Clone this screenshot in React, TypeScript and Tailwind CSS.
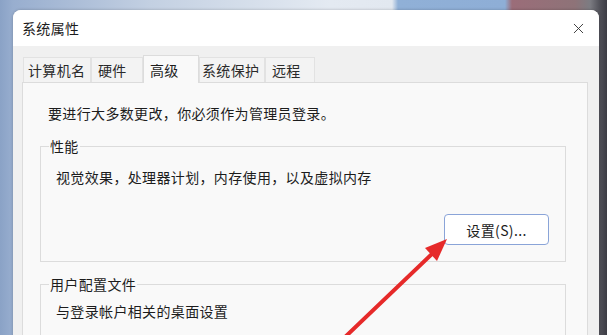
import { X } from 'lucide-react';

const tabs = [
  { label: '计算机名', w: 'w-[68px] pl-[4px]' },
  { label: '硬件', w: 'w-[52px] pl-[6px]' },
  { label: '高级', w: 'w-[56px] pl-[6px]', active: true },
  { label: '系统保护', w: 'w-[66px] pl-[2px]' },
  { label: '远程', w: 'w-[50px] pl-[6px]' },
];

function Arrow() {
  return (
    <svg className="absolute left-0 top-0 pointer-events-none" width="607" height="335" viewBox="0 0 607 335">
      <line x1="343" y1="339" x2="434" y2="252" stroke="#e62a2a" strokeWidth="4" strokeLinecap="round" />
      <polygon points="447,239 437,261 425,248" fill="#e62a2a" />
    </svg>
  );
}

export default function App() {
  return (
    <div
      className="relative w-[607px] h-[335px] overflow-hidden text-[#1c1c1c] tracking-[0.35px] bg-[linear-gradient(90deg,#8aa2c6_0px,#98aecf_13px,#c3d0e2_150px,#e4eaf2_330px,#e2e8f0_392px,#90b0d7_398px,#8eaed6_505px,#9b6d79_512px,#8e7378_575px,#7c7c82_590px,#505058_600px,#3c3c44_607px)]"
      style={{ fontFamily: '"Noto Sans CJK SC", "Noto Sans", sans-serif' }}
    >
      <div className="ml-[13px] mt-[10px] w-[586px] h-[340px] rounded-t-[8px] overflow-hidden bg-[#f0f0f0] shadow-[0_0_3px_rgba(0,0,0,0.25)]">
        {/* title bar */}
        <div className="h-[36px] bg-white flex items-center justify-between pl-[9px] pr-[12px]">
          <span className="text-[14px] leading-[20px]">系统属性</span>
          <X size={17} strokeWidth={1.3} className="text-[#333]" />
        </div>

        {/* tabs */}
        <div className="h-[36px] flex items-end pl-[10px]">
          {tabs.map((t) =>
            t.active ? (
              <div
                key={t.label}
                className={`${t.w} relative z-10 -mb-px h-[28px] flex items-center bg-[#f9f9f9] border border-b-0 border-[#dcdcdc] text-[14px] leading-[20px]`}
              >
                {t.label}
              </div>
            ) : (
              <div
                key={t.label}
                className={`${t.w} h-[25px] flex items-center bg-[#f3f3f3] border border-b-0 border-[#e2e2e2] text-[14px] leading-[20px] text-[#2a2a2a]`}
              >
                {t.label}
              </div>
            )
          )}
        </div>

        {/* panel */}
        <div className="ml-[9px] mr-[11px] h-[260px] bg-[#f9f9f9] border border-[#dcdcdc] flex flex-col text-[14px] leading-[20px]">
          <p className="mt-[20px] pl-[25px]">要进行大多数更改，你必须作为管理员登录。</p>

          <fieldset className="mt-[13px] ml-[17px] mr-[21px] pl-[8px] pb-[16px] border border-[#dcdcdc] flex flex-col">
            <legend className="px-[1px]">性能</legend>
            <p className="mt-[11px] pl-[7px]">视觉效果，处理器计划，内存使用，以及虚拟内存</p>
            <button className="mt-[27px] self-end mr-[16px] w-[105px] h-[31px] rounded-[4px] bg-white border border-[#8aa4d8] text-[14px]">
              设置(S)...
            </button>
          </fieldset>

          <fieldset className="mt-[12px] ml-[17px] mr-[21px] pl-[8px] pb-[20px] border border-[#dcdcdc] flex flex-col">
            <legend className="px-[1px]">用户配置文件</legend>
            <p className="mt-[7px] pl-[7px]">与登录帐户相关的桌面设置</p>
          </fieldset>
        </div>
      </div>
      <Arrow />
    </div>
  );
}
